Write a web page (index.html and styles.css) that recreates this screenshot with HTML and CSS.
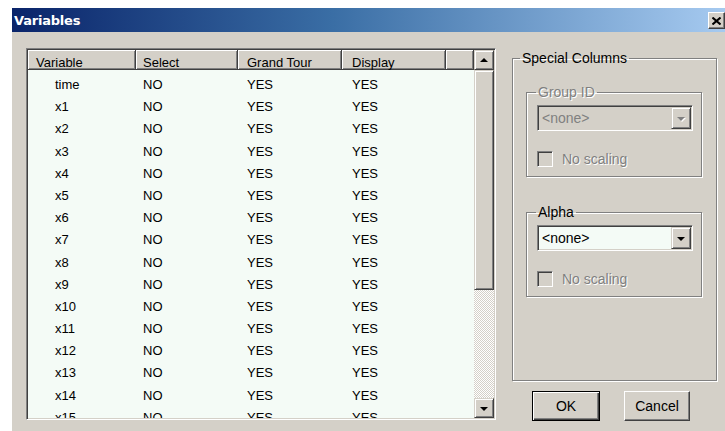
FILE: index.html
```html
<!DOCTYPE html>
<html lang="en">
<head>
<meta charset="utf-8">
<title>Variables</title>
<link rel="stylesheet" href="styles.css">
</head>
<body>
<div class="dialog">
  <div class="titlebar">
    <span class="title">Variables</span>
    <span class="close-btn">
      <svg width="9" height="8" viewBox="0 0 9 8"><path d="M0.5 0.5 L8.5 7.5 M8.5 0.5 L0.5 7.5" stroke="#000" stroke-width="2" fill="none"/></svg>
    </span>
  </div>
  <div class="client">
    <div class="listview">
      <div class="list-area">
        <div class="list-header">
          <div class="hcell c1">Variable</div>
          <div class="hcell c2">Select</div>
          <div class="hcell c3">Grand Tour</div>
          <div class="hcell c4">Display</div>
          <div class="hcell c5"></div>
        </div>
        <div class="list-rows">
          <div class="row"><span class="cell c1">time</span><span class="cell c2">NO</span><span class="cell c3">YES</span><span class="cell c4">YES</span></div>
          <div class="row"><span class="cell c1">x1</span><span class="cell c2">NO</span><span class="cell c3">YES</span><span class="cell c4">YES</span></div>
          <div class="row"><span class="cell c1">x2</span><span class="cell c2">NO</span><span class="cell c3">YES</span><span class="cell c4">YES</span></div>
          <div class="row"><span class="cell c1">x3</span><span class="cell c2">NO</span><span class="cell c3">YES</span><span class="cell c4">YES</span></div>
          <div class="row"><span class="cell c1">x4</span><span class="cell c2">NO</span><span class="cell c3">YES</span><span class="cell c4">YES</span></div>
          <div class="row"><span class="cell c1">x5</span><span class="cell c2">NO</span><span class="cell c3">YES</span><span class="cell c4">YES</span></div>
          <div class="row"><span class="cell c1">x6</span><span class="cell c2">NO</span><span class="cell c3">YES</span><span class="cell c4">YES</span></div>
          <div class="row"><span class="cell c1">x7</span><span class="cell c2">NO</span><span class="cell c3">YES</span><span class="cell c4">YES</span></div>
          <div class="row"><span class="cell c1">x8</span><span class="cell c2">NO</span><span class="cell c3">YES</span><span class="cell c4">YES</span></div>
          <div class="row"><span class="cell c1">x9</span><span class="cell c2">NO</span><span class="cell c3">YES</span><span class="cell c4">YES</span></div>
          <div class="row"><span class="cell c1">x10</span><span class="cell c2">NO</span><span class="cell c3">YES</span><span class="cell c4">YES</span></div>
          <div class="row"><span class="cell c1">x11</span><span class="cell c2">NO</span><span class="cell c3">YES</span><span class="cell c4">YES</span></div>
          <div class="row"><span class="cell c1">x12</span><span class="cell c2">NO</span><span class="cell c3">YES</span><span class="cell c4">YES</span></div>
          <div class="row"><span class="cell c1">x13</span><span class="cell c2">NO</span><span class="cell c3">YES</span><span class="cell c4">YES</span></div>
          <div class="row"><span class="cell c1">x14</span><span class="cell c2">NO</span><span class="cell c3">YES</span><span class="cell c4">YES</span></div>
          <div class="row"><span class="cell c1">x15</span><span class="cell c2">NO</span><span class="cell c3">YES</span><span class="cell c4">YES</span></div>
        </div>
      </div>
      <div class="vscroll">
        <div class="sbtn"><span class="arrow-up"></span></div>
        <div class="thumb"></div>
        <div class="track"></div>
        <div class="sbtn"><span class="arrow-down"></span></div>
      </div>
    </div>

    <div class="side">
      <fieldset class="group outer">
        <legend>Special Columns</legend>
        <fieldset class="group inner first">
          <legend class="disabled">Group ID</legend>
          <div class="combo is-disabled">
            <span class="combo-text">&lt;none&gt;</span>
            <span class="combo-btn"><span class="arrow-down gray"></span></span>
          </div>
          <div class="check disabled"><span class="box"></span><span>No scaling</span></div>
        </fieldset>
        <fieldset class="group inner second">
          <legend>Alpha</legend>
          <div class="combo">
            <span class="combo-text">&lt;none&gt;</span>
            <span class="combo-btn"><span class="arrow-down"></span></span>
          </div>
          <div class="check disabled"><span class="box"></span><span>No scaling</span></div>
        </fieldset>
      </fieldset>
      <div class="buttons">
        <div class="btn btn-default">OK</div>
        <div class="btn">Cancel</div>
      </div>
    </div>
  </div>
</div>
</body>
</html>
```
FILE: styles.css
```css
* { box-sizing: border-box; }

html, body {
  margin: 0;
  background: #ffffff;
}

body {
  font-family: "Liberation Sans", Arial, sans-serif;
  font-size: 13px;
  color: #000;
  overflow: hidden;
}

.dialog {
  margin: 8px 0 0 12px;
  width: 713px;
  height: 423px;
  background: #d4d0c8;
  overflow: hidden;
}

/* caption bar */
.titlebar {
  height: 24px;
  display: flex;
  align-items: center;
  justify-content: space-between;
  padding: 0 0 0 2px;
  background: linear-gradient(to right, #0a246a 0%, #3a6ea5 45%, #a6caf0 100%);
}

.title {
  font-family: "DejaVu Sans", Verdana, sans-serif;
  font-weight: bold;
  font-size: 13px;
  color: #fff;
  letter-spacing: -0.2px;
}

.close-btn {
  width: 17px;
  height: 17px;
  margin-top: 1px;
  display: flex;
  align-items: center;
  justify-content: center;
  background: #d4d0c8;
  border: 1px solid;
  border-color: #fff #404040 #404040 #fff;
  box-shadow: inset -1px -1px 0 #808080;
}

.client {
  display: flex;
  padding: 16px 0 0 14px;
}

/* list view */
.listview {
  width: 470px;
  height: 372px;
  display: flex;
  padding: 1px;
  border: 1px solid;
  border-color: #808080 #fff #fff #808080;
  box-shadow: inset 1px 1px 0 #404040, inset -1px -1px 0 #d4d0c8;
  background: #f4fbf6;
}

.list-area {
  width: 446px;
  overflow: hidden;
}

.list-header {
  display: flex;
  height: 20px;
}

.hcell {
  height: 20px;
  line-height: 20px;
  padding-top: 3px;
  background: #d4d0c8;
  border-right: 1px solid #404040;
  border-bottom: 1px solid #404040;
  box-shadow: inset 1px 1px 0 #fff, inset -1px -1px 0 #808080;
  white-space: nowrap;
}

.c1 { width: 108px; padding-left: 8px; }
.c2 { width: 102px; padding-left: 7px; }
.c3 { width: 104px; padding-left: 9px; }
.c4 { width: 104px; padding-left: 10px; }
.c5 { width: 28px; }

.list-rows {
  padding-top: 4px;
}

.row {
  display: flex;
  height: 22.2px;
  line-height: 22px;
}

.row .cell { display: block; }
.row .c1 { padding-left: 27px; }

/* vertical scroll bar */
.vscroll {
  width: 20px;
  display: flex;
  flex-direction: column;
}

.sbtn, .thumb, .combo-btn {
  background: #d4d0c8;
  border: 1px solid;
  border-color: #d4d0c8 #404040 #404040 #d4d0c8;
  box-shadow: inset 1px 1px 0 #fff, inset -1px -1px 0 #808080;
}

.sbtn {
  height: 20px;
  display: flex;
  align-items: center;
  justify-content: center;
}

.thumb { height: 220px; }

.track {
  flex: 1;
  background: repeating-conic-gradient(#ffffff 0 25%, #d4d0c8 0 50%) 0 0 / 2px 2px;
}

.arrow-up, .arrow-down {
  width: 0;
  height: 0;
  border-left: 4px solid transparent;
  border-right: 4px solid transparent;
}

.arrow-up { border-bottom: 4px solid #000; margin-top: -1px; }
.arrow-down { border-top: 4px solid #000; margin-top: 1px; }
.arrow-down.gray { border-top-color: #808080; filter: drop-shadow(1px 1px 0 #fff); }

/* right-hand panel */
.side {
  width: 205px;
  margin-left: 16px;
  margin-top: 2px;
  font-size: 14px;
}

.group {
  margin: 0;
  padding: 0;
  border: 1px solid #808080;
  box-shadow: inset 1px 1px 0 #fff, 1px 1px 0 #fff;
  min-width: 0;
}

.group legend {
  line-height: 16px;
  padding: 0 2px;
}

.outer {
  height: 331px;
}

.outer > legend { margin-left: 7px; }

.inner {
  width: 176px;
  margin-left: 13px;
  padding: 5px 0 9px 0;
}

.inner > legend { margin-left: 9px; }

.inner.first { margin-top: 18px; }
.inner.second { margin-top: 27px; }

.disabled {
  color: #808080;
  text-shadow: 1px 1px 0 #fff;
}

/* drop-down list */
.combo {
  width: 156px;
  height: 26px;
  margin-left: 10px;
  display: flex;
  padding: 1px;
  border: 1px solid;
  border-color: #808080 #fff #fff #808080;
  box-shadow: inset 1px 1px 0 #404040, inset -1px -1px 0 #d4d0c8;
  background: #f4fbf6;
}

.combo.is-disabled {
  background: #d4d0c8;
  color: #808080;
}

.combo-text {
  flex: 1;
  padding-left: 3px;
  line-height: 22px;
}

.combo-btn {
  width: 20px;
  display: flex;
  align-items: center;
  justify-content: center;
}

/* check box */
.check {
  display: flex;
  align-items: center;
  gap: 9px;
  margin-top: 20px;
  margin-left: 10px;
  height: 16px;
}

.check .box {
  width: 16px;
  height: 16px;
  border: 1px solid;
  border-color: #808080 #fff #fff #808080;
  box-shadow: inset 1px 1px 0 #404040, inset -1px -1px 0 #d4d0c8;
  background: #d4d0c8;
}

/* push buttons */
.buttons {
  display: flex;
  gap: 24px;
  margin-top: 10px;
  padding-left: 20px;
}

.btn {
  width: 66px;
  height: 30px;
  display: flex;
  align-items: center;
  justify-content: center;
  background: #d4d0c8;
  border: 1px solid;
  border-color: #fff #404040 #404040 #fff;
  box-shadow: inset -1px -1px 0 #808080;
}

.btn-default {
  width: 68px;
  border: 1px solid #000;
  box-shadow: inset 1px 1px 0 #fff, inset -1px -1px 0 #404040, inset -2px -2px 0 #808080;
}
```
